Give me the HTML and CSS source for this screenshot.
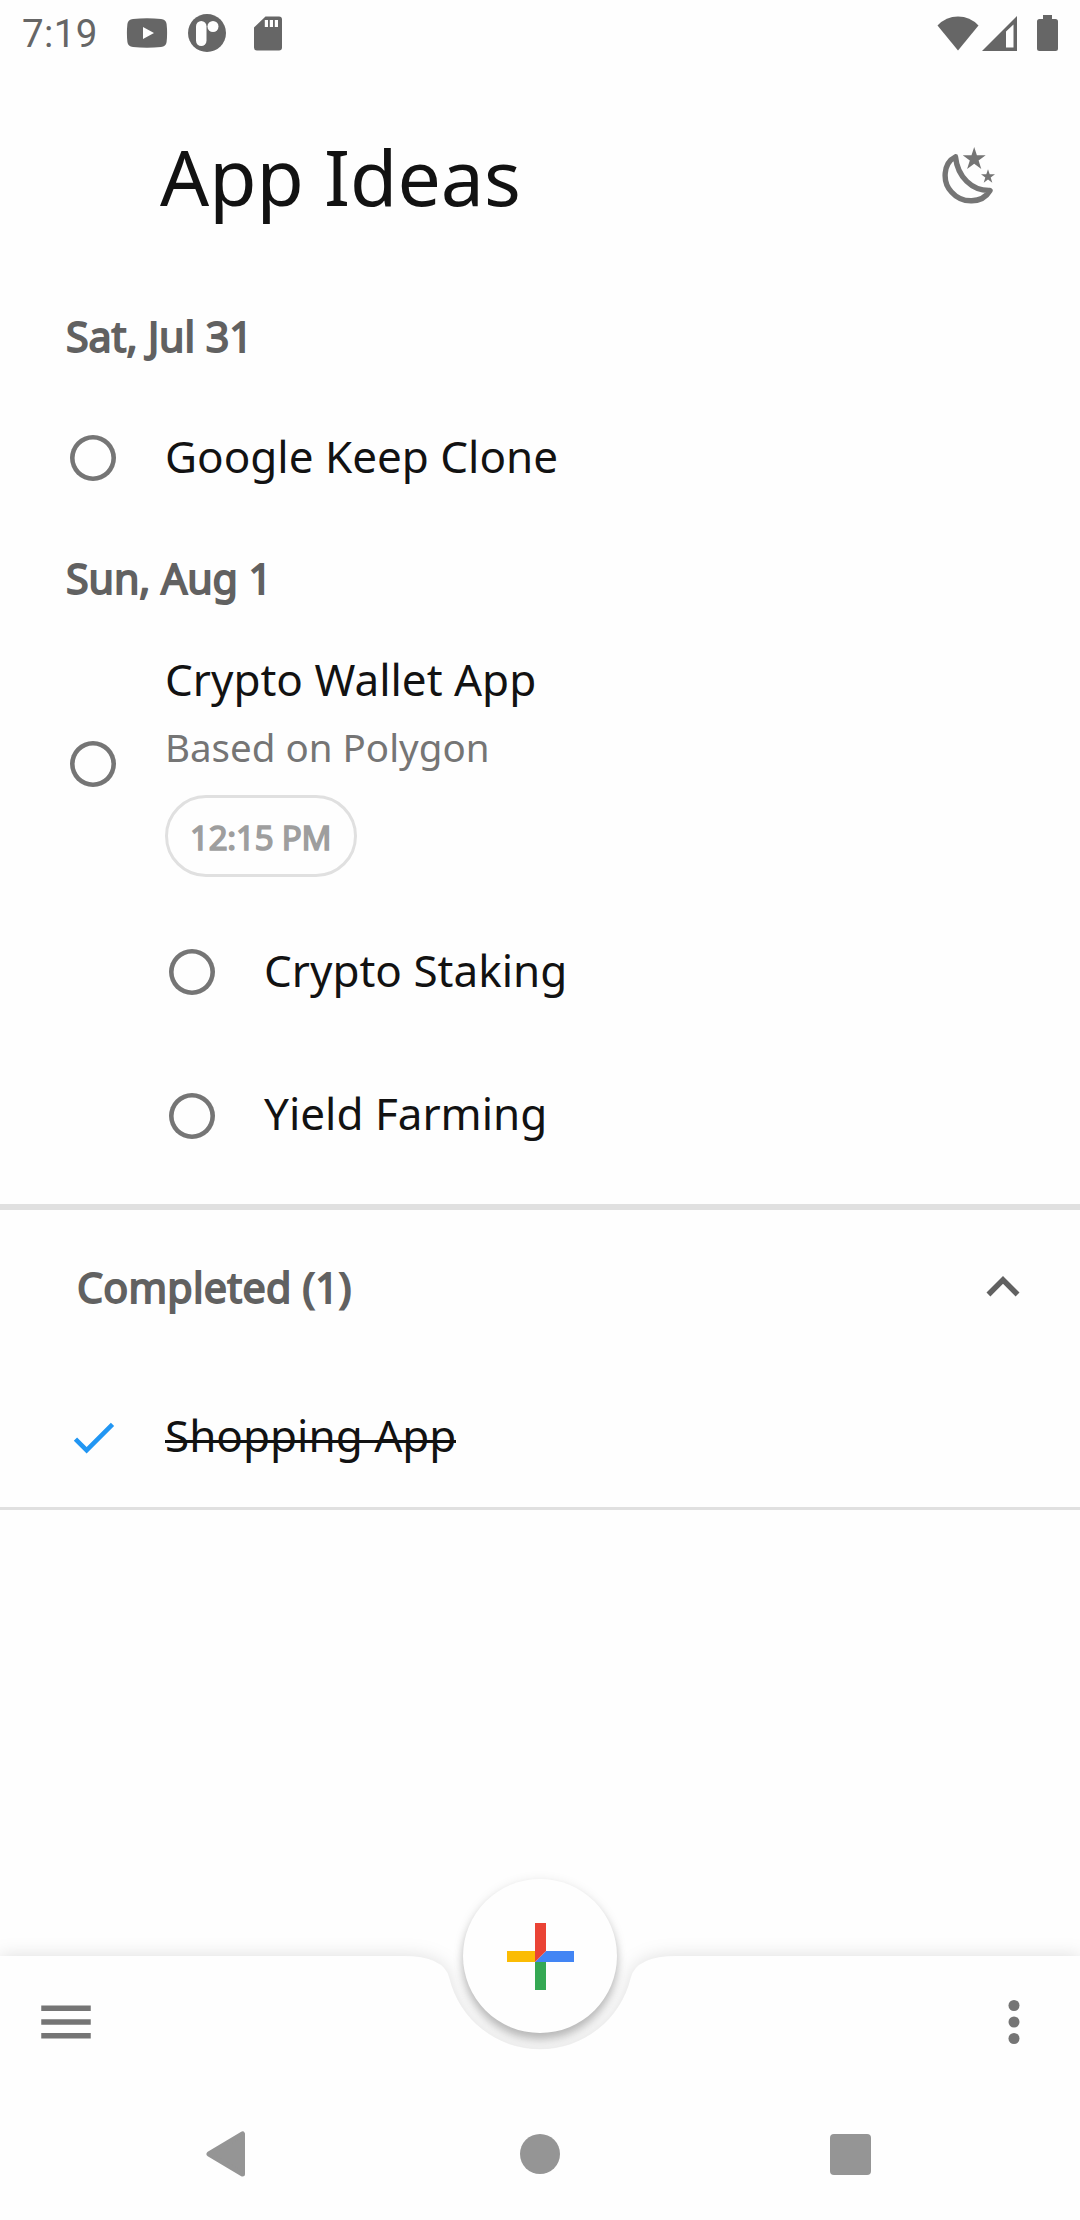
FILE: index.html
```html
<!DOCTYPE html>
<html lang="en">
<head>
<meta charset="utf-8">
<title>App Ideas</title>
<link rel="stylesheet" href="styles.css">
</head>
<body>
<div class="screen">
  <div class="status">
    <span class="clock">7:19</span>
    <svg class="st-video" width="42" height="30" viewBox="0 0 42 30"><path fill-rule="evenodd" d="M7 .9Q21-.6 35 .9Q40 1.400 40.600 6Q41.600 15 40.600 24Q40 28.600 35 29.100Q21 30.400 7 29.100Q2 28.600 1.400 24Q.4 15 1.400 6Q2 1.400 7 .9ZM17 9V21L28 15Z"/></svg>
    <svg class="st-round" width="38" height="38" viewBox="0 0 38 38"><circle cx="19" cy="19" r="19"/><rect x="8" y="7" width="10.500" height="25" rx="5.250" fill="#fefefe"/><circle cx="25" cy="12.500" r="5.500" fill="#fefefe"/></svg>
    <svg class="st-card" width="28" height="35" viewBox="0 0 28 35"><path fill-rule="evenodd" d="M11.500.5H25Q28 .5 28 3.500V31.500Q28 34.500 25 34.500H3Q0 34.500 0 31.500V11.500ZM10.800 4V11H14V4ZM15.800 4V11H19V4ZM20.800 4V11H24V4Z"/></svg>
    <span class="grow"></span>
    <svg width="42" height="35" viewBox="0 0 42 35"><path d="M21 34.500L.5 9.500Q9 .5 21 .5T41.500 9.500Z"/></svg>
    <svg class="st-signal" width="35" height="35" viewBox="0 0 35 35"><path fill-rule="evenodd" d="M0 35L35 0V35ZM24 15.500V31.500H31.500V8.500Z"/></svg>
    <svg class="st-battery" width="21" height="36" viewBox="0 0 21 36"><path d="M6 0H15V4H18.500Q21 4 21 6.500V33.500Q21 36 18.500 36H2.500Q0 36 0 33.500V6.500Q0 4 2.500 4H6Z"/></svg>
  </div>

  <header class="header">
    <h1>App Ideas</h1>
    <svg class="moon" width="54" height="60" viewBox="0 0 54 60">
      <path d="M13.500 10.800C1 17 0 36 9.500 46C20 58 40 58 48 44.500C30 45 15.500 31 13.500 10.800Z" fill="none" stroke="#757575" stroke-width="5.400" stroke-linejoin="round"/>
      <path fill="#757575" d="M32.200 1L34.900 9.300H43.700L36.600 14.500L39.300 22.900L32.200 17.700L25.100 22.900L27.800 14.500L20.700 9.300H29.500ZM46 23.200L47.700 28.300H53L48.700 31.500L50.300 36.800L46 33.600L41.700 36.800L43.300 31.500L39 28.300H44.300Z"/>
    </svg>
  </header>

  <main>
    <h2 class="date">Sat, Jul 31</h2>
    <div class="task first">
      <span class="radio"></span><span class="label">Google Keep Clone</span>
    </div>
    <h2 class="date second">Sun, Aug 1</h2>
    <div class="task tall">
      <span class="radio"></span>
      <div class="details">
        <span class="name">Crypto Wallet App</span>
        <span class="note">Based on Polygon</span>
        <span class="chip">12:15 PM</span>
      </div>
    </div>
    <div class="task sub"><span class="radio"></span><span class="label">Crypto Staking</span></div>
    <div class="task sub last"><span class="radio"></span><span class="label">Yield Farming</span></div>

    <section class="completed">
      <div class="completed-head">
        <h2>Completed (1)</h2>
        <svg width="66" height="66" viewBox="0 0 24 24" fill="#616161"><path d="M12 8l-6 6 1.410 1.410L12 10.830l4.590 4.580L18 14z"/></svg>
      </div>
      <div class="task done">
        <svg class="check" width="55" height="55" viewBox="0 0 24 24" fill="#2196f3"><path d="M9 16.170L4.830 12l-1.420 1.410L9 19 21 7l-1.410-1.410z"/></svg>
        <span class="label">Shopping App</span>
      </div>
    </section>
  </main>

  <footer class="bottom-bar">
    <svg class="bar-shape" width="1080" height="264" viewBox="0 0 1080 264"><path fill="#fefefe" d="M0 0H402.700Q444 0 449.300 21.900A93.300 93.300 0 0 0 630.700 21.900Q636 0 677.300 0H1080V264H0Z"/></svg>
    <svg class="menu" width="66" height="66" viewBox="0 0 24 24" fill="#757575"><path d="M3 18h18v-2H3v2zm0-5h18v-2H3v2zm0-7v2h18V6H3z"/></svg>
    <svg class="more" width="66" height="66" viewBox="0 0 24 24" fill="#757575"><circle cx="12" cy="6" r="2"/><circle cx="12" cy="12" r="2"/><circle cx="12" cy="18" r="2"/></svg>
    <div class="fab">
      <svg width="67" height="67" viewBox="0 0 67 67">
        <path fill="#fbbc04" d="M0 28H28V39H0Z"/><path fill="#34a853" d="M28 39H39V67H28Z"/><path fill="#4285f4" d="M28 39L39 28H67V39Z"/><path fill="#ea4335" d="M28 0H39V28L28 39Z"/>
      </svg>
    </div>
  </footer>

  <nav class="system-nav">
    <svg width="40" height="46" viewBox="0 0 40 46"><path d="M3 23L36.500 3V43Z" stroke="#959595" stroke-width="5" stroke-linejoin="round"/></svg>
    <svg class="home" width="40" height="40" viewBox="0 0 40 40"><circle cx="20" cy="20" r="20"/></svg>
    <svg width="41" height="41" viewBox="0 0 41 41"><rect width="41" height="41" rx="4"/></svg>
  </nav>
</div>
</body>
</html>
```
FILE: styles.css
```css
* { box-sizing: border-box; }

body { margin: 0; background: #fefefe; }

svg { display: block; flex: none; }

h1, h2 { margin: 0; font-weight: 400; }

.screen {
  width: 1080px;
  height: 2220px;
  display: flex;
  flex-direction: column;
  overflow: hidden;
  color: #121212;
  font-family: "Noto Sans", sans-serif;
  font-size: 44px;
  line-height: 60px;
}

.status {
  height: 66px;
  padding: 0 22px;
  display: flex;
  align-items: center;
  color: #666;
  fill: #666;
  font: 38.5px/66px Roboto, sans-serif;
}
.clock { width: 104px; padding-top: 2px; letter-spacing: .4px; }
.st-round { margin-left: 20px; }
.st-card { margin-left: 28px; }
.grow { flex: 1; }
.st-signal { margin-left: 3px; }
.st-battery { margin-left: 20px; }

.header {
  height: 220px;
  padding: 0 84px 0 160px;
  display: flex;
  align-items: center;
  justify-content: space-between;
}
.header h1 { padding-top: 1px; font-size: 77px; line-height: 104px; }

main { flex: 1; }

.date, .completed-head h2 {
  color: #616161;
  font-size: 41.25px;
  line-height: 60px;
  -webkit-text-stroke: 1.8px #616161;
}
.date { margin-top: 20px; padding-left: 66px; letter-spacing: -.1px; }
.date.second { margin-top: 18px; }
.completed-head h2 { letter-spacing: .25px; }

.task {
  height: 144px;
  padding-left: 66px;
  display: flex;
  align-items: center;
  gap: 44px;
}
.task.first { margin-top: 20px; }
.radio {
  flex: none;
  width: 46px;
  height: 46px;
  margin: 0 5px 0 4px;
  border-radius: 50%;
  box-shadow: inset 0 0 0 4.6px #757575;
}
.label { padding-bottom: 5px; }

.task.tall { height: 280px; margin-top: 12px; padding-top: 8px; }
.details {
  display: flex;
  flex-direction: column;
  align-items: flex-start;
  padding-bottom: 2px;
}
.note { margin-top: 12px; color: #757575; font-size: 38.5px; line-height: 52px; }
.chip {
  width: 192px;
  height: 82px;
  margin-top: 22px;
  padding: 2px 0 0 22px;
  border: 3px solid #e0e0e0;
  border-radius: 41px;
  color: #9e9e9e;
  font-size: 33px;
  line-height: 76px;
  letter-spacing: -.2px;
  -webkit-text-stroke: 1.6px #9e9e9e;
}
.task.sub { padding-left: 165px; }
.task.last { height: 143px; }

.completed {
  margin-top: 17px;
  border-top: 6px solid #e0e0e0;
  border-bottom: 3px solid #e0e0e0;
}
.completed-head {
  height: 154px;
  padding: 0 44px 0 77px;
  display: flex;
  align-items: center;
  justify-content: space-between;
}
.task.done { height: 143px; padding-top: 4px; }
.done .label { position: relative; }
/* thin strike line through the lower half of the x-height */
.done .label::after {
  content: "";
  position: absolute;
  left: 0;
  right: 0;
  top: 35px;
  height: 2.5px;
  background: #121212;
}

.bottom-bar {
  position: relative;
  height: 132px;
  padding: 0 33px;
  display: flex;
  align-items: center;
  justify-content: space-between;
}
.menu, .more { position: relative; }
.bar-shape {
  position: absolute;
  left: 0;
  top: 0;
  overflow: visible;
  filter: drop-shadow(0 0 9px rgba(0, 0, 0, .13));
}
.fab {
  position: absolute;
  left: 463px;
  top: -77px;
  width: 154px;
  height: 154px;
  display: flex;
  align-items: center;
  justify-content: center;
  border-radius: 50%;
  background: #fefefe;
  box-shadow: 0 7px 8px rgba(0, 0, 0, .22), 0 2px 12px rgba(0, 0, 0, .1);
}

.system-nav {
  position: relative;
  height: 132px;
  padding: 0 209px 0 206px;
  display: flex;
  align-items: center;
  justify-content: space-between;
  fill: #959595;
}
.home { margin-left: 4px; }
```
